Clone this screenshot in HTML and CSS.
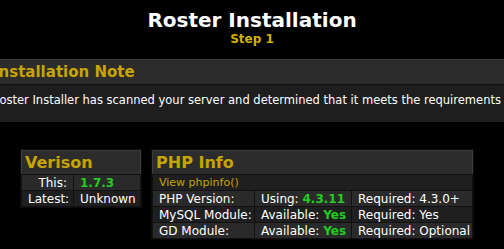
FILE: index.html
```html
<!DOCTYPE html>
<html lang="en">
<head>
    <meta charset="UTF-8">
    <title>Roster Installation</title>
    <link rel="stylesheet" href="styles.css">
</head>
<body>
    <div class="header">
        <h1>Roster Installation</h1>
        <div class="step">Step 1</div>
    </div>

    <div class="note">
        <div class="note-title">Installation Note</div>
        <div class="note-body">Roster Installer has scanned your server and determined that it meets the requirements</div>
    </div>

    <div class="panels">
        <table class="box version">
            <col class="c-label"><col class="c-value">
            <tr><th colspan="2">Verison</th></tr>
            <tr class="row1"><td class="label">This:</td><td><span class="ok">1.7.3</span></td></tr>
            <tr class="row2"><td class="label">Latest:</td><td>Unknown</td></tr>
        </table>

        <table class="box php">
            <col class="c-name"><col class="c-using"><col class="c-req">
            <tr><th colspan="3">PHP Info</th></tr>
            <tr class="row2"><td colspan="3" class="link">View phpinfo()</td></tr>
            <tr class="row1"><td>PHP Version:</td><td>Using: <span class="ok">4.3.11</span></td><td>Required: 4.3.0+</td></tr>
            <tr class="row2"><td>MySQL Module:</td><td>Available: <span class="ok">Yes</span></td><td>Required: Yes</td></tr>
            <tr class="row1"><td>GD Module:</td><td>Available: <span class="ok">Yes</span></td><td>Required: Optional</td></tr>
        </table>
    </div>
</body>
</html>
```

FILE: styles.css
```css
body {
    margin: 0;
    background-color: #000000;
    color: #ffffff;
    font-family: "DejaVu Sans", Verdana, sans-serif;
    font-size: 12px;
    overflow: hidden;
}
.header {
    text-align: center;
    padding-top: 8px;
    height: 51px;
}
h1 {
    margin: 0;
    font-size: 20px;
    line-height: 24px;
    font-weight: bold;
}
.step {
    color: #d4b000;
    font-size: 12px;
    font-weight: bold;
    line-height: 15px;
}
.note {
    margin-left: -8px;
    width: 530px;
    border-top: 1px solid #3a3a3a;
}
.note-title {
    background-color: #2c2c2c;
    color: #c8a400;
    font-size: 15px;
    font-weight: bold;
    line-height: 24px;
    height: 24px;
    padding-left: 1px;
    border-bottom: 1px solid #111111;
}
.note-body {
    background-color: #1e1e1e;
    font-size: 11.5px;
    padding: 8px 0 0;
    height: 29px;
    white-space: nowrap;
}
.panels {
    display: flex;
    align-items: flex-start;
    gap: 11px;
    margin-top: 28px;
    padding-left: 21px;
}
.box {
    border-collapse: collapse;
    table-layout: fixed;
    border: 1px solid #3c3c3c;
    outline: 1px solid #0c0c0c;
}
.box th {
    background-color: #2c2c2c;
    color: #c8a400;
    font-size: 16px;
    text-align: left;
    height: 23px;
    padding: 0 3px;
    border-bottom: 1px solid #111111;
}
.box td {
    height: 15px;
    padding: 0 6px;
    border: 1px solid #111111;
    white-space: nowrap;
}
.row1 td {
    background-color: #2a2a2a;
}
.row2 td {
    background-color: #1f1f1f;
}
.version {
    width: 119px;
}
.c-label {
    width: 52px;
}
.c-value {
    width: 67px;
}
.version .label {
    text-align: right;
}
.php {
    width: 320px;
}
.c-name {
    width: 102px;
}
.c-using {
    width: 97px;
}
.c-req {
    width: 121px;
}
.link {
    color: #c8a400;
    font-size: 11px;
}
.ok {
    color: #22cc22;
    font-weight: bold;
}
```
